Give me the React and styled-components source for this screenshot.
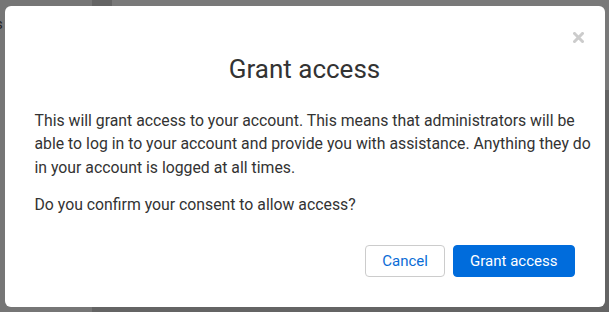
import React from 'react';
import styled, { createGlobalStyle } from 'styled-components';

const GlobalStyle = createGlobalStyle`
  html, body {
    margin: 0;
    padding: 0;
    height: 100%;
  }
  body {
    font-family: Roboto, "Liberation Sans", sans-serif;
    color: #333;
    overflow: hidden;
  }
  #root {
    height: 100%;
  }
`;

const Page = styled.div`
  display: flex;
  width: 100%;
  height: 100vh;
  background: #fff;
`;

const Sidebar = styled.div`
  width: 92px;
  flex-shrink: 0;
  background: #ededed;
  padding-top: 14px;
`;

const NavItem = styled.div`
  font-size: 15px;
  line-height: 20px;
  color: #444;
  margin-left: -5px;
`;

const Main = styled.div`
  flex: 1;
  display: flex;
  flex-direction: column;
  background: #c9c9c9;
`;

const TopBar = styled.div`
  height: 90px;
  margin-left: 20px;
  background: #f2f2f2;
`;

const Overlay = styled.div`
  position: fixed;
  inset: 0;
  display: flex;
  align-items: center;
  justify-content: center;
  background: rgba(0, 0, 0, 0.5);
`;

const Modal = styled.div`
  position: relative;
  width: 600px;
  box-sizing: border-box;
  padding: 48px 30px 30px;
  background: #fff;
  border-radius: 6px;
  display: flex;
  flex-direction: column;
`;

const Close = styled.button`
  position: absolute;
  top: 26px;
  right: 21px;
  width: 11px;
  height: 11px;
  padding: 0;
  border: 0;
  background: none;
  display: flex;
`;

const Title = styled.h2`
  margin: 0 0 25px;
  font-size: 26px;
  font-weight: 400;
  line-height: 30px;
  text-align: center;
  color: #333;
`;

const Text = styled.p`
  margin: 0 -20px 14px 0;
  font-size: 15.8px;
  line-height: 23.5px;
  color: #333;

  &:last-of-type {
    margin-bottom: 0;
  }
`;

const Footer = styled.div`
  display: flex;
  justify-content: flex-end;
  gap: 8px;
  margin-top: 28px;
`;

const Button = styled.button`
  height: 32px;
  padding: 0 16px;
  box-sizing: border-box;
  border-radius: 4px;
  font-family: Roboto, "Liberation Sans", sans-serif;
  font-size: 15px;
  border: 1px solid ${(p) => (p.primary ? '#006cdc' : '#ccc')};
  background: ${(p) => (p.primary ? '#006cdc' : '#fff')};
  color: ${(p) => (p.primary ? '#fff' : '#0a6cd6')};
  min-width: ${(p) => (p.primary ? '121px' : '80px')};
`;

const CloseIcon = () => (
  <svg width="11" height="11" viewBox="0 0 11 11">
    <path d="M1.5 1.5 L9.5 9.5 M9.5 1.5 L1.5 9.5" stroke="#cccccc" strokeWidth="3" strokeLinecap="square" fill="none" />
  </svg>
);

export default function App() {
  return (
    <>
      <GlobalStyle />
      <Page>
        <Sidebar>
          <NavItem>s</NavItem>
        </Sidebar>
        <Main>
          <TopBar />
        </Main>
      </Page>
      <Overlay>
        <Modal>
          <Close aria-label="Close">
            <CloseIcon />
          </Close>
          <Title>Grant access</Title>
          <Text>
            This will grant access to your account. This means that administrators will be
            able to log in to your account and provide you with assistance. Anything they do
            in your account is logged at all times.
          </Text>
          <Text>Do you confirm your consent to allow access?</Text>
          <Footer>
            <Button>Cancel</Button>
            <Button primary>Grant access</Button>
          </Footer>
        </Modal>
      </Overlay>
    </>
  );
}
